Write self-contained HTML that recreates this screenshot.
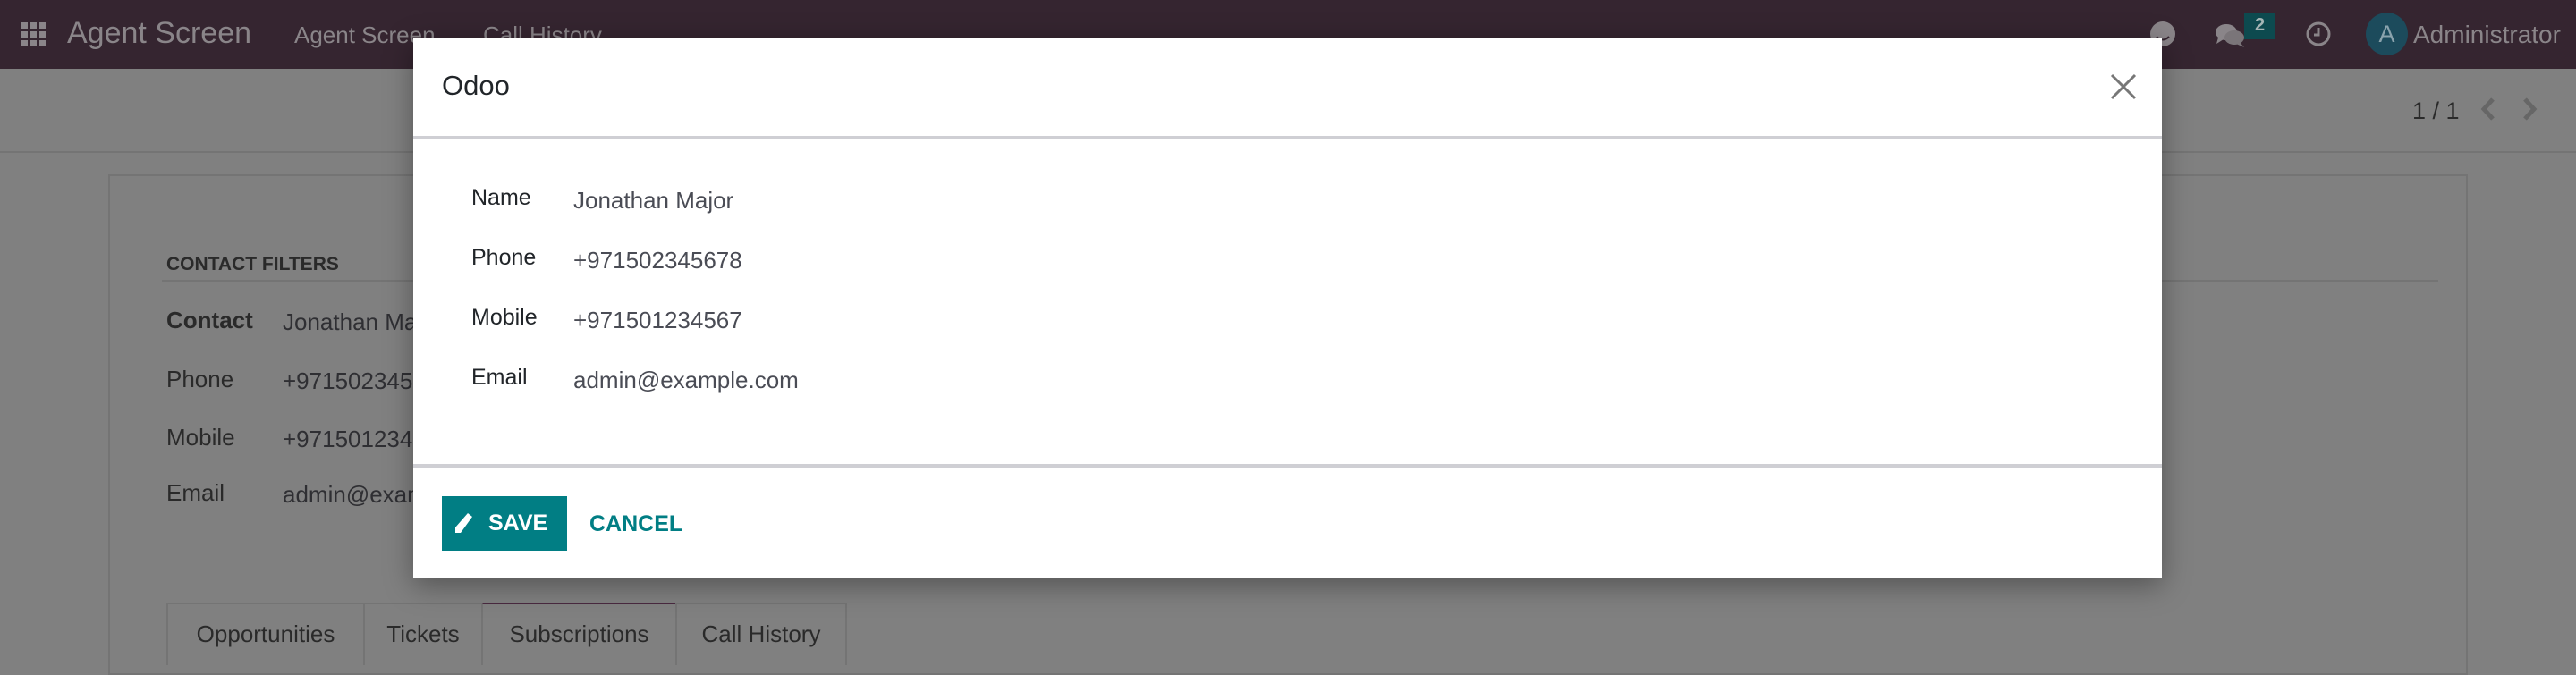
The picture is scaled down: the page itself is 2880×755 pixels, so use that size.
<!DOCTYPE html>
<html><head><meta charset="utf-8"><style>
*{box-sizing:border-box;margin:0;padding:0}
body{width:2880px;height:740px;overflow:hidden;background:#808080;font-family:"Liberation Sans",sans-serif;position:relative}
.abs{position:absolute;white-space:nowrap}
.nav{position:absolute;left:0;top:0;width:2880px;height:77px;background:#352530}
.navt{color:#8a8589}
.cp{position:absolute;left:0;top:77px;width:2880px;height:94px;border-bottom:2px solid #747474;background:#808080}
.sheet{position:absolute;left:121px;top:195px;width:2638px;height:560px;border:2px solid #747474;background:#808080}
.lbl{color:#2a2a2a;font-size:26px}
.val{color:#2f2f33;font-size:26px}
.modal{position:absolute;left:462px;top:42px;width:1955px;height:605px;background:#fff;box-shadow:0 8px 30px rgba(0,0,0,.35)}
.tab{position:absolute;top:674px;height:70px;border:2px solid #747474;border-bottom:none;font-size:26px;color:#2a2a2a;padding-top:18px;text-align:center}
</style></head><body>
<div class="nav"></div>
<svg class="abs" style="left:24px;top:25px" width="27" height="27" viewBox="0 0 27 27" fill="#8a8589">
<rect x="0" y="0" width="7" height="7"/><rect x="10" y="0" width="7" height="7"/><rect x="20" y="0" width="7" height="7"/>
<rect x="0" y="10" width="7" height="7"/><rect x="10" y="10" width="7" height="7"/><rect x="20" y="10" width="7" height="7"/>
<rect x="0" y="20" width="7" height="7"/><rect x="10" y="20" width="7" height="7"/><rect x="20" y="20" width="7" height="7"/></svg>
<div class="abs navt" style="left:75px;top:18px;font-size:34px">Agent Screen</div>
<div class="abs navt" style="left:329px;top:24px;font-size:26px">Agent Screen</div>
<div class="abs navt" style="left:540px;top:24px;font-size:26px">Call History</div>
<svg class="abs" style="left:2403px;top:23px" width="30" height="30"><circle cx="15" cy="15" r="14" fill="#8a8589"/><path d="M8 18 Q15 25 22 18" stroke="#352530" stroke-width="2" fill="none"/></svg>
<svg class="abs" style="left:2476px;top:25px" width="36" height="30"><ellipse cx="13" cy="11" rx="12" ry="9" fill="#8a8589"/><path d="M4 17 L2 24 L10 19Z" fill="#8a8589"/><ellipse cx="22" cy="17" rx="11" ry="8" fill="#7a7579"/><path d="M28 22 L33 28 L24 24Z" fill="#7a7579"/></svg>
<div class="abs" style="left:2509px;top:14px;width:35px;height:30px;background:#0d4a4f;color:#a5b5b5;font-size:20px;font-weight:bold;text-align:center;line-height:28px">2</div>
<svg class="abs" style="left:2577px;top:23px" width="30" height="30"><circle cx="15" cy="15" r="12" stroke="#8a8589" stroke-width="3" fill="none"/><path d="M15 8 V16 H10" stroke="#8a8589" stroke-width="3" fill="none"/></svg>
<div class="abs" style="left:2645px;top:14px;width:47px;height:48px;border-radius:50%;background:#1c4b5c;color:#8aa3ad;font-size:27px;text-align:center;line-height:48px">A</div>
<div class="abs navt" style="left:2698px;top:23px;font-size:28px">Administrator</div>
<div class="cp"></div>
<div class="abs" style="left:2697px;top:109px;font-size:27px;color:#2a2a2a">1 / 1</div>
<svg class="abs" style="left:2772px;top:108px" width="20" height="28"><path d="M15 3 L5 14 L15 25" stroke="#666" stroke-width="5" fill="none"/></svg>
<svg class="abs" style="left:2818px;top:108px" width="20" height="28"><path d="M5 3 L15 14 L5 25" stroke="#666" stroke-width="5" fill="none"/></svg>
<div class="sheet"></div>
<div class="abs" style="left:186px;top:284px;font-size:21px;font-weight:bold;color:#2a2a2a">CONTACT FILTERS</div>
<div class="abs" style="left:181px;top:313px;width:2545px;height:2px;background:#747474"></div>
<div class="abs lbl" style="left:186px;top:343px;font-weight:bold">Contact</div><div class="abs val" style="left:316px;top:345px">Jonathan Major</div>
<div class="abs lbl" style="left:186px;top:409px">Phone</div><div class="abs val" style="left:316px;top:411px">+971502345678</div>
<div class="abs lbl" style="left:186px;top:474px">Mobile</div><div class="abs val" style="left:316px;top:476px">+971501234567</div>
<div class="abs lbl" style="left:186px;top:536px">Email</div><div class="abs val" style="left:316px;top:538px">admin@example.com</div>
<div class="tab" style="left:186px;width:222px">Opportunities</div>
<div class="tab" style="left:406px;width:134px">Tickets</div>
<div class="tab" style="left:538px;width:219px;border-top-color:#4a2a40">Subscriptions</div>
<div class="tab" style="left:755px;width:192px">Call History</div>
<div class="modal">
 <div class="abs" style="left:32px;top:36px;font-size:31px;color:#212529">Odoo</div>
 <svg class="abs" style="left:1897px;top:40px" width="30" height="30"><path d="M2 2 L28 28 M28 2 L2 28" stroke="#777" stroke-width="3"/></svg>
 <div class="abs" style="left:0;top:110px;width:1955px;height:3px;background:#cfcfd4"></div>
 <div class="abs" style="left:65px;top:165px;font-size:25px;color:#212529">Name</div><div class="abs" style="left:179px;top:167px;font-size:26px;color:#4a4c55">Jonathan Major</div>
 <div class="abs" style="left:65px;top:232px;font-size:25px;color:#212529">Phone</div><div class="abs" style="left:179px;top:234px;font-size:26px;color:#4a4c55">+971502345678</div>
 <div class="abs" style="left:65px;top:299px;font-size:25px;color:#212529">Mobile</div><div class="abs" style="left:179px;top:301px;font-size:26px;color:#4a4c55">+971501234567</div>
 <div class="abs" style="left:65px;top:366px;font-size:25px;color:#212529">Email</div><div class="abs" style="left:179px;top:368px;font-size:26px;color:#4a4c55">admin@example.com</div>
 <div class="abs" style="left:0;top:477px;width:1955px;height:4px;background:#cfcfd4"></div>
 <div class="abs" style="left:32px;top:513px;width:140px;height:61px;background:#017e84;color:#fff;font-size:25px;font-weight:bold;line-height:61px;padding-left:52px">SAVE</div>
 <svg class="abs" style="left:45px;top:530px" width="22" height="26"><path d="M16 2 L21 6 L8 24 L2 24 L2 18 Z" fill="#fff"/></svg>
 <div class="abs" style="left:197px;top:530px;font-size:25px;font-weight:bold;color:#017e84">CANCEL</div>
</div>
</body></html>
